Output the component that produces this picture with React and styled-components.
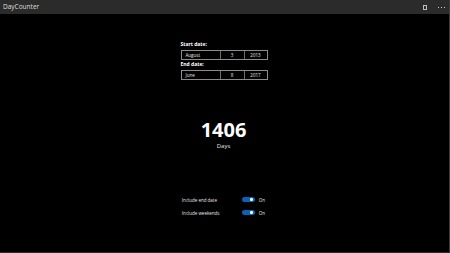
import React from 'react';
import styled, { createGlobalStyle } from 'styled-components';

const GlobalStyle = createGlobalStyle`
  html, body {
    margin: 0;
    padding: 0;
    background: #000;
  }
  body {
    font-family: "Open Sans", "Liberation Sans", sans-serif;
  }
`;

const settings = [
  { label: 'Include end date', on: true },
  { label: 'Include weekends', on: true },
];

function App() {
  return (
    <>
      <GlobalStyle />
      <StyledWindow>
        <StyledTitleBar>
          <StyledTitle>DayCounter</StyledTitle>
          <StyledTitleActions>
            <svg width="4" height="5" viewBox="0 0 4 5">
              <rect x="0.5" y="0.5" width="3" height="4" fill="none" stroke="#bdbdbd" strokeWidth="1" />
            </svg>
            <StyledMore>
              <span />
              <span />
              <span />
            </StyledMore>
          </StyledTitleActions>
        </StyledTitleBar>

        <StyledContent>
          <StyledForm>
            <StyledLabel>Start date:</StyledLabel>
            <StyledDateBox>
              <StyledMonth>August</StyledMonth>
              <StyledPart>3</StyledPart>
              <StyledPart>2013</StyledPart>
            </StyledDateBox>
            <StyledLabel>End date:</StyledLabel>
            <StyledDateBox>
              <StyledMonth>June</StyledMonth>
              <StyledPart>8</StyledPart>
              <StyledPart>2017</StyledPart>
            </StyledDateBox>
          </StyledForm>

          <StyledCount>1406</StyledCount>
          <StyledUnit>Days</StyledUnit>

          <StyledSettings>
            {settings.map((item) => (
              <StyledRow key={item.label}>
                <StyledRowLabel>{item.label}</StyledRowLabel>
                <StyledToggle $on={item.on} />
                <StyledState>{item.on ? 'On' : 'Off'}</StyledState>
              </StyledRow>
            ))}
          </StyledSettings>
        </StyledContent>
      </StyledWindow>
    </>
  );
}

export default App;

const StyledWindow = styled.div`
  box-sizing: border-box;
  width: 450px;
  height: 253px;
  background: #000;
  border-right: 1px solid #3a3a3a;
  border-bottom: 1px solid #2a2a2a;
  display: flex;
  flex-direction: column;
  overflow: hidden;
`;

const StyledTitleBar = styled.div`
  height: 14px;
  flex-shrink: 0;
  background: #2b2b2b;
  display: flex;
  align-items: center;
  justify-content: space-between;
  padding: 0 3px 0 3px;
`;

const StyledTitle = styled.div`
  font-size: 6.5px;
  color: #dedede;
  line-height: 14px;
`;

const StyledTitleActions = styled.div`
  display: flex;
  align-items: center;
  gap: 11px;
  margin-top: 1px;
`;

const StyledMore = styled.div`
  display: flex;
  gap: 2px;
  margin-right: 1px;

  span {
    width: 1px;
    height: 1px;
    background: #cfcfcf;
  }
`;

const StyledContent = styled.div`
  flex: 1;
  display: flex;
  flex-direction: column;
  align-items: center;
`;

const StyledForm = styled.div`
  width: 87px;
  margin-top: 27px;
  margin-left: -1px;
`;

const StyledLabel = styled.div`
  font-size: 5px;
  font-weight: 700;
  color: #fff;
  line-height: 7px;
  margin-bottom: 2px;
`;

const StyledDateBox = styled.div`
  box-sizing: border-box;
  height: 10px;
  border: 1px solid #8c8c8c;
  display: grid;
  grid-template-columns: 38px 24px 1fr;
  margin-bottom: 1px;
`;

const StyledPart = styled.div`
  font-size: 4.5px;
  color: #e8e8e8;
  line-height: 8px;
  text-align: center;
  border-left: 1px solid #6e6e6e;
`;

const StyledMonth = styled(StyledPart)`
  text-align: left;
  padding-left: 4px;
  border-left: none;
`;

const StyledCount = styled.div`
  font-size: 20px;
  font-weight: 700;
  color: #fff;
  line-height: 24px;
  margin-top: 37px;
  margin-left: -2px;
`;

const StyledUnit = styled.div`
  font-size: 6px;
  color: #e6e6e6;
  line-height: 9px;
  margin-top: 0;
  margin-left: -2px;
`;

const StyledSettings = styled.div`
  margin-top: 45px;
  margin-left: -2px;
  display: flex;
  flex-direction: column;
  gap: 6px;
`;

const StyledRow = styled.div`
  display: flex;
  align-items: center;
  height: 7px;
`;

const StyledRowLabel = styled.div`
  width: 60px;
  font-size: 4.5px;
  color: #e6e6e6;
`;

const StyledToggle = styled.div`
  position: relative;
  width: 13px;
  height: 5px;
  border-radius: 3px;
  background: ${(p) => (p.$on ? '#0a62b8' : 'transparent')};

  &::after {
    content: '';
    position: absolute;
    top: 1.25px;
    left: ${(p) => (p.$on ? '8.5px' : '1.5px')};
    width: 2.5px;
    height: 2.5px;
    border-radius: 50%;
    background: #fff;
  }
`;

const StyledState = styled.div`
  margin-left: 4px;
  font-size: 4.5px;
  color: #e6e6e6;
`;
